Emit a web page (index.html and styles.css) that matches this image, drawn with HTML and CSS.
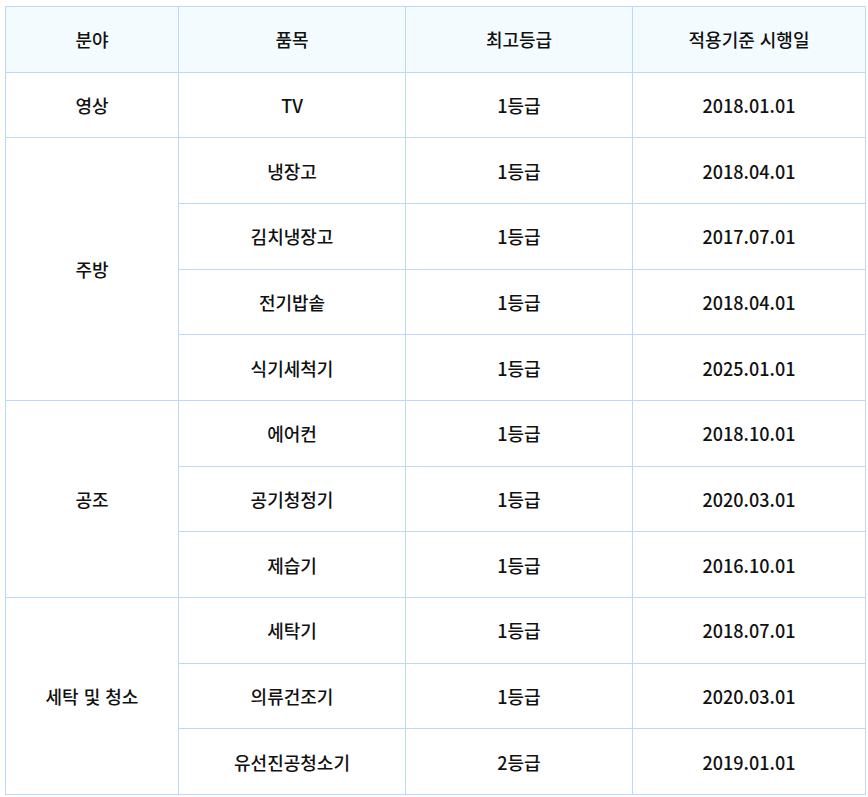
FILE: index.html
```html
<!DOCTYPE html>
<html lang="ko">
<head>
<meta charset="utf-8">
<link rel="stylesheet" href="styles.css">
</head>
<body>
<table class="grade-table">
  <colgroup>
    <col class="c1"><col class="c2"><col class="c3"><col class="c4">
  </colgroup>
  <thead>
    <tr><th>분야</th><th>품목</th><th>최고등급</th><th>적용기준 시행일</th></tr>
  </thead>
  <tbody>
    <tr><td>영상</td><td>TV</td><td>1등급</td><td>2018.01.01</td></tr>
    <tr><td rowspan="4">주방</td><td>냉장고</td><td>1등급</td><td>2018.04.01</td></tr>
    <tr><td>김치냉장고</td><td>1등급</td><td>2017.07.01</td></tr>
    <tr><td>전기밥솥</td><td>1등급</td><td>2018.04.01</td></tr>
    <tr><td>식기세척기</td><td>1등급</td><td>2025.01.01</td></tr>
    <tr><td rowspan="3">공조</td><td>에어컨</td><td>1등급</td><td>2018.10.01</td></tr>
    <tr><td>공기청정기</td><td>1등급</td><td>2020.03.01</td></tr>
    <tr><td>제습기</td><td>1등급</td><td>2016.10.01</td></tr>
    <tr><td rowspan="3">세탁 및 청소</td><td>세탁기</td><td>1등급</td><td>2018.07.01</td></tr>
    <tr><td>의류건조기</td><td>1등급</td><td>2020.03.01</td></tr>
    <tr><td>유선진공청소기</td><td>2등급</td><td>2019.01.01</td></tr>
  </tbody>
</table>
</body>
</html>
```
FILE: styles.css
```css
html, body {
  margin: 0;
  padding: 0;
  background: #ffffff;
}
body {
  padding: 6px 4px 0 5px;
  font-family: "Noto Sans CJK KR", "Noto Sans", sans-serif;
  font-size: 18px;
  color: #111111;
}
.grade-table {
  width: 860px;
  border-collapse: collapse;
  table-layout: fixed;
}
.c1 { width: 173px; }
.c2 { width: 227px; }
.c3 { width: 227px; }
.c4 { width: 233px; }
.grade-table th,
.grade-table td {
  border: 1px solid #bcd8fa;
  height: 64.67px;
  padding: 0;
  text-align: center;
  vertical-align: middle;
  font-weight: 500;
  line-height: 22px;
}
.grade-table th {
  background: #f4fbff;
}
```
